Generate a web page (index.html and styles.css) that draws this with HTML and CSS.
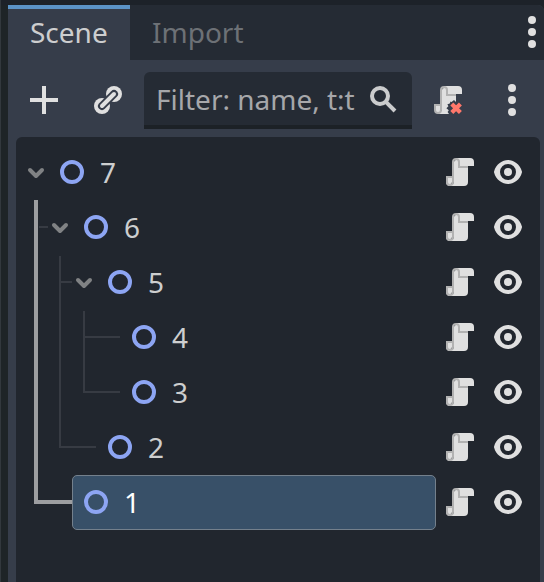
FILE: index.html
```html
<!DOCTYPE html>
<html lang="en">
<head>
<meta charset="utf-8">
<title>Scene</title>
<link rel="stylesheet" href="styles.css">
</head>
<body>
<svg class="defs" width="0" height="0">
  <symbol id="script" viewBox="0 0 16 16">
    <path fill="#e0e0e0" d="M6 1v1a1 1 0 0 0-1 1v10a1 1 0 0 1-1 1 1 1 0 0 1-1-1v-2H1v2a2 2 0 0 0 2 2h7a2 2 0 0 0 2-2V5h3V3a2 2 0 0 0-2-2z"/>
    <path fill="#e0e0e0" d="M2 11h2v2a1 1 0 0 1-2 0z"/>
    <path fill="#b2b2b2" fill-rule="evenodd" d="M6 1a2 2 0 0 0-2 2v7H1v3a2 2 0 0 0 4 0V3a1 1 0 0 1 2 0v3h5V5H8V3a2 2 0 0 0-2-2zM2 11h2v2a1 1 0 0 1-2 0z"/>
  </symbol>
  <symbol id="eye" viewBox="0 0 16 16">
    <path fill="#e0e0e0" fill-rule="evenodd" d="M8 2C5.255 2 2.031 3.98 1.035 7.73a1 1 0 0 0 0 .513C2.008 12.03 5.221 14 8 14s5.992-1.97 6.965-5.757a1 1 0 0 0 0-.514C13.969 3.979 10.745 2 8 2zm0 2a4 4 0 0 1 0 8 4 4 0 0 1 0-8zm0 2a2 2 0 0 0 0 4 2 2 0 0 0 0-4z"/>
  </symbol>
  <symbol id="node" viewBox="0 0 16 16"><circle cx="8" cy="8" r="5" fill="none" stroke="#8da5f3" stroke-width="2"/></symbol>
  <symbol id="arrow" viewBox="0 0 24 24"><path d="M6 10l6 6 6-6" fill="none" stroke="#808284" stroke-width="4" stroke-linecap="round" stroke-linejoin="round"/></symbol>
  <symbol id="dots" viewBox="0 0 16 16"><g fill="#e0e0e0"><circle cx="8" cy="2" r="2"/><circle cx="8" cy="8" r="2"/><circle cx="8" cy="14" r="2"/></g></symbol>
</svg>
<div class="dock">
  <nav class="tabs">
    <div class="tab active">Scene</div>
    <div class="tab">Import</div>
    <svg class="icon tabs-menu"><use href="#dots"/></svg>
  </nav>
  <div class="toolbar">
    <svg class="icon" viewBox="0 0 16 16"><path fill="#e0e0e0" d="M7 1h2v6h6v2H9v6H7V9H1V7h6z"/></svg>
    <svg class="icon link" viewBox="0 0 16 16">
      <circle cx="11" cy="5" r="4" fill="#e0e0e0"/><circle cx="5" cy="11" r="4" fill="#e0e0e0"/>
      <path d="M5 11l6-6" stroke="#363d4a" stroke-width="4" stroke-linecap="round"/>
      <path d="M5 11l6-6" stroke="#e0e0e0" stroke-width="2" stroke-linecap="round"/>
    </svg>
    <div class="filter">
      <span>Filter: name, t:t</span>
      <svg class="icon" viewBox="0 0 16 16"><g fill="none" stroke="#cbcccd" stroke-width="2"><circle cx="6" cy="6" r="4"/><path d="M8.8 8.8l4.7 4.7"/></g></svg>
    </div>
    <svg class="icon detach" viewBox="0 0 16 16">
      <path fill="#e0e0e0" d="M6 1v1a1 1 0 0 0-1 1v12h3.5l-.7-1 .6-.9-1.2-1 1-1-.5-1 1.2-.4.3-1 .6.3L11 8l1 1V5h3V3a2 2 0 0 0-2-2z"/>
      <path fill="#e0e0e0" d="M2 11h2v2l2 1v1H3l-1-1z"/>
      <path fill="#b2b2b2" fill-rule="evenodd" d="M6 1a2 2 0 0 0-2 2v7H1v3a2 2 0 0 0 4 0V3a1 1 0 0 1 2 0v3h5V5H8V3a2 2 0 0 0-2-2zM2 11h2v2a1 1 0 0 1-2 0z"/>
      <path d="M9.9 10l4.3 4.3m0-4.3l-4.3 4.3" stroke="#ff786b" stroke-width="2.1"/>
    </svg>
    <svg class="icon menu"><use href="#dots"/></svg>
  </div>
  <div class="tree">
    <svg class="guides" viewBox="16 137 200 400" width="200" height="400">
      <g fill="none" stroke="#373b43" stroke-width="2">
        <path d="M39 227h9M60 256v191h36M60 282h12M84 311v81h36M84 337h36"/>
      </g>
      <path d="M36 200v302h36" fill="none" stroke="#9d9ea1" stroke-width="4"/>
    </svg>
    <div class="row"><div class="cell d0"><svg class="arrow"><use href="#arrow"/></svg><svg class="icon"><use href="#node"/></svg><span>7</span></div><svg class="icon"><use href="#script"/></svg><svg class="icon"><use href="#eye"/></svg></div>
    <div class="row"><div class="cell d1"><svg class="arrow"><use href="#arrow"/></svg><svg class="icon"><use href="#node"/></svg><span>6</span></div><svg class="icon"><use href="#script"/></svg><svg class="icon"><use href="#eye"/></svg></div>
    <div class="row"><div class="cell d2"><svg class="arrow"><use href="#arrow"/></svg><svg class="icon"><use href="#node"/></svg><span>5</span></div><svg class="icon"><use href="#script"/></svg><svg class="icon"><use href="#eye"/></svg></div>
    <div class="row"><div class="cell leaf d3"><svg class="icon"><use href="#node"/></svg><span>4</span></div><svg class="icon"><use href="#script"/></svg><svg class="icon"><use href="#eye"/></svg></div>
    <div class="row"><div class="cell leaf d3"><svg class="icon"><use href="#node"/></svg><span>3</span></div><svg class="icon"><use href="#script"/></svg><svg class="icon"><use href="#eye"/></svg></div>
    <div class="row"><div class="cell leaf d2"><svg class="icon"><use href="#node"/></svg><span>2</span></div><svg class="icon"><use href="#script"/></svg><svg class="icon"><use href="#eye"/></svg></div>
    <div class="row"><div class="cell leaf d1 selected"><svg class="icon"><use href="#node"/></svg><span>1</span></div><svg class="icon"><use href="#script"/></svg><svg class="icon"><use href="#eye"/></svg></div>
  </div>
</div>
</body>
</html>
```
FILE: styles.css
```css
* { box-sizing: border-box; }
body {
  margin: 0;
  height: 582px;
  overflow: hidden;
  padding: 5px 0 0 7px;
  border-left: 1px solid #32383d;
  background: linear-gradient(#1d2229, #1d2229) top / 100% 5px no-repeat #1e2427;
  font: 28px/38px "Noto Sans", sans-serif;
  color: #cdcecf;
}
.defs { position: absolute; }
svg { display: block; flex: none; }
.icon { width: 32px; height: 32px; }
.dock {
  height: 577px;
  display: flex;
  flex-direction: column;
  background: #363d4a;
  border-top-right-radius: 6px;
}
.tabs {
  display: flex;
  height: 55px;
  background: #252b34;
  border-top-right-radius: 6px;
}
.tab { padding: 8px 22px 0; color: #6d7176; }
.tab.active {
  width: 122px;
  padding-top: 4px;
  border-top: 4px solid #5b93c6;
  background: #363d4a;
  color: #cdcecf;
}
.tabs-menu { margin: 11px -4px 0 auto; }
.toolbar {
  display: flex;
  align-items: center;
  height: 57px;
  margin-top: 12px;
  padding: 0 16px 0 20px;
}
.toolbar > .icon { margin-top: -1px; }
.link { margin-left: 32px; }
.filter {
  display: flex;
  align-items: center;
  justify-content: space-between;
  width: 268px;
  height: 57px;
  margin-left: 20px;
  padding: 3px 12px 0;
  border-bottom: 4px solid #1c2126;
  border-radius: 6px 6px 0 0;
  background: #252b34;
  color: #a6a7aa;
  white-space: nowrap;
}
.filter span { margin-top: -2px; }
.detach { margin-left: 20px; }
.menu { margin-left: auto; }
.tree {
  position: relative;
  flex: 1;
  margin: 8px 4px 0 8px;
  padding-top: 8px;
  border-radius: 6px 6px 0 0;
  background: #21262e;
}
.guides { position: absolute; left: 0; top: 0; }
.row {
  display: flex;
  align-items: center;
  height: 55px;
  padding-right: 16px;
  gap: 16px;
}
.row > .icon { margin-top: -1px; }
.cell {
  position: relative;
  display: flex;
  align-items: center;
  flex: 1;
  height: 55px;
  margin-right: -8px;
}
.cell span { margin-top: -1px; }
.cell .icon { margin: -1px 12px 0 8px; }
.cell .arrow { width: 24px; height: 24px; margin: -1px 0 0; }
.d0 { margin-left: 8px; }
.d1 { margin-left: 32px; }
.d2 { margin-left: 56px; }
.leaf { padding-left: 8px; }
.leaf .icon { margin-left: 0; }
.leaf.d1 { margin-left: 56px; }
.leaf.d2 { margin-left: 80px; }
.leaf.d3 { margin-left: 104px; }
.selected {
  border: 1px solid #74808c;
  border-radius: 5px;
  padding-left: 7px;
  background: #385068;
  color: #fff;
}
```
